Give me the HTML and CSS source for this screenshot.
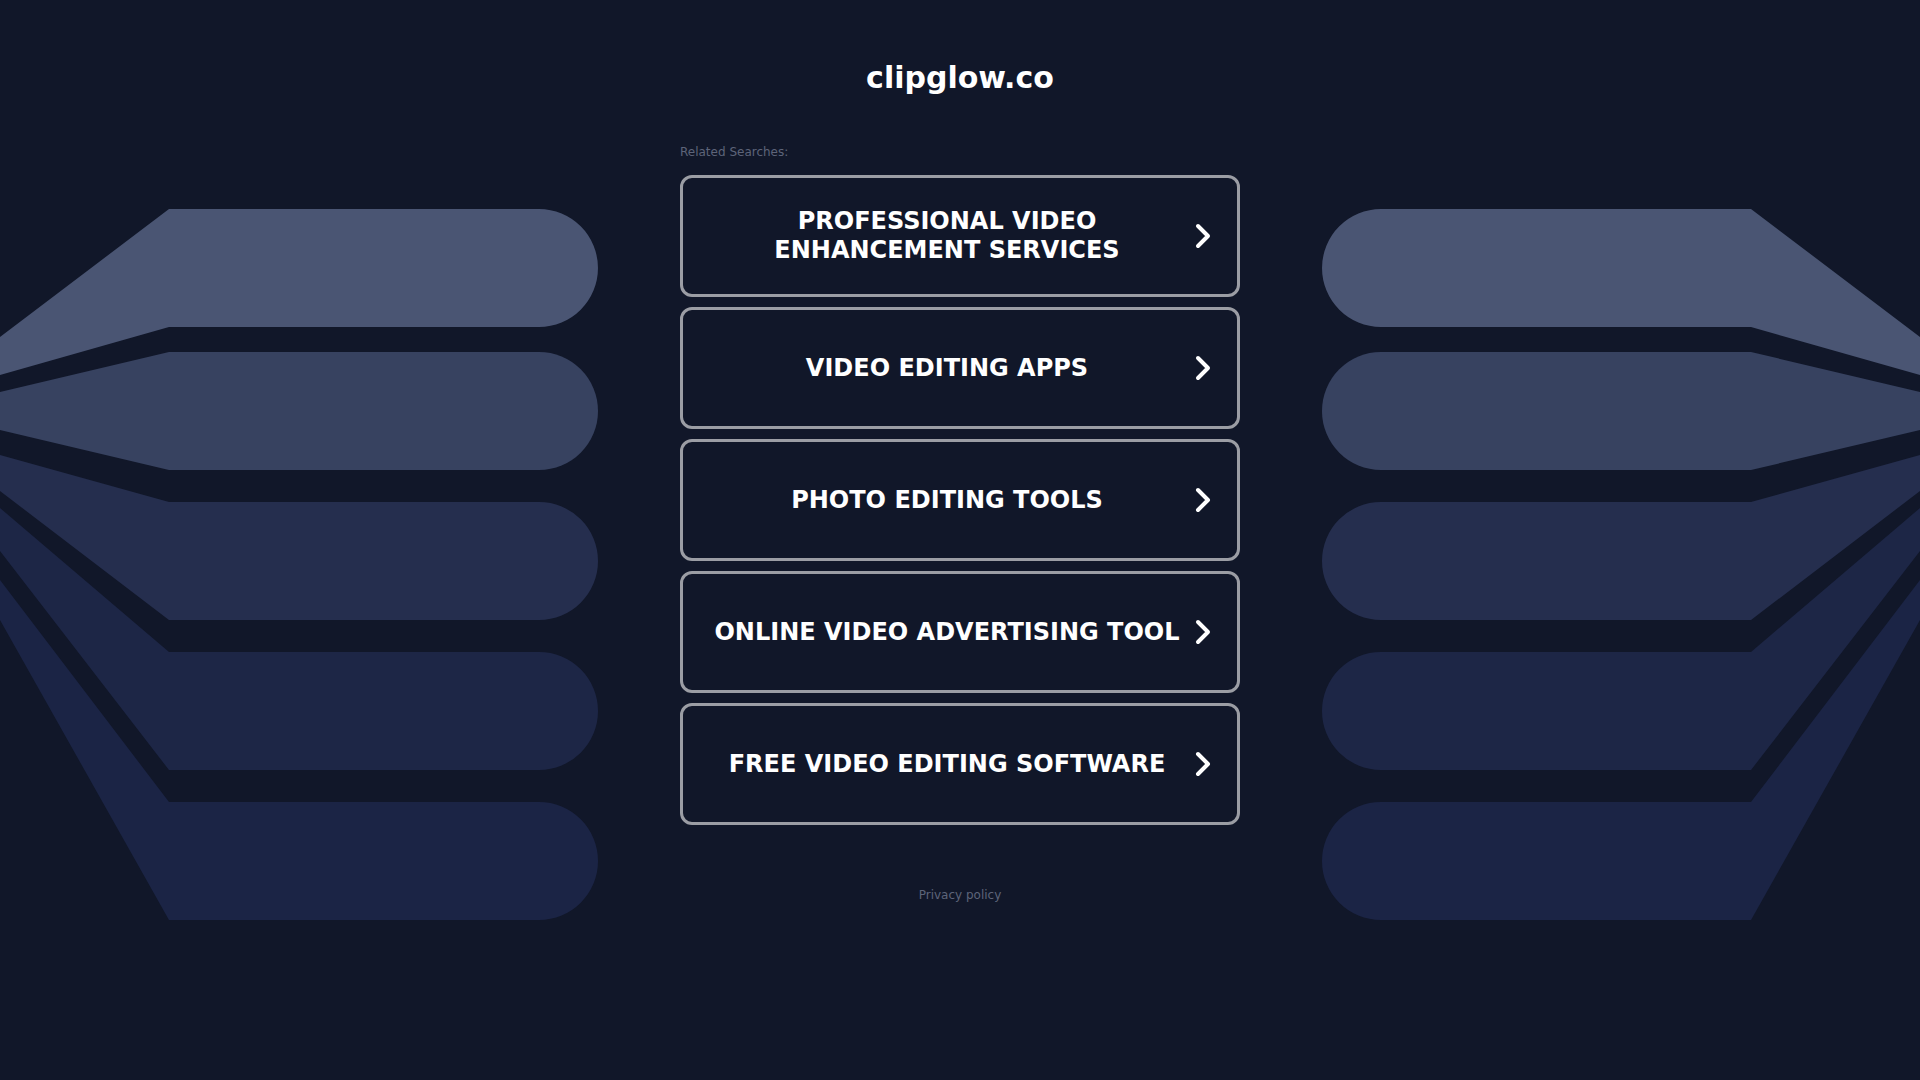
FILE: index.html
```html
<html>
  <meta charset="UTF-8" />
  <head>
    <title>clipglow.co</title>
    <link rel="stylesheet" href="styles.css">
  </head>
  <body>
    <svg class="fan left" width="600" height="1080" viewBox="0 0 600 1080">
      <path class="b1" d="M0 337 L169 209 L539 209 A59 59 0 0 1 539 327 L169 327 L0 375 Z" />
      <path class="b2" d="M0 392 L169 352 L539 352 A59 59 0 0 1 539 470 L169 470 L0 430 Z" />
      <path class="b3" d="M0 455 L169 502 L539 502 A59 59 0 0 1 539 620 L169 620 L0 491 Z" />
      <path class="b4" d="M0 508 L169 652 L539 652 A59 59 0 0 1 539 770 L169 770 L0 551 Z" />
      <path class="b5" d="M0 580 L169 802 L539 802 A59 59 0 0 1 539 920 L169 920 L0 620 Z" />
    </svg>
    <svg class="fan right" width="600" height="1080" viewBox="0 0 600 1080">
      <path class="b1" d="M0 337 L169 209 L539 209 A59 59 0 0 1 539 327 L169 327 L0 375 Z" />
      <path class="b2" d="M0 392 L169 352 L539 352 A59 59 0 0 1 539 470 L169 470 L0 430 Z" />
      <path class="b3" d="M0 455 L169 502 L539 502 A59 59 0 0 1 539 620 L169 620 L0 491 Z" />
      <path class="b4" d="M0 508 L169 652 L539 652 A59 59 0 0 1 539 770 L169 770 L0 551 Z" />
      <path class="b5" d="M0 580 L169 802 L539 802 A59 59 0 0 1 539 920 L169 920 L0 620 Z" />
    </svg>
    <div class="page">
      <h1 class="domain">clipglow.co</h1>
      <div class="related">
        <div class="label">Related Searches:</div>
        <a class="result" href="#"><span>Professional Video Enhancement Services</span>
          <svg class="chev" width="16" height="26" viewBox="0 0 16 26"><path d="M3 3 L13 13 L3 23" /></svg></a>
        <a class="result" href="#"><span>Video Editing Apps</span>
          <svg class="chev" width="16" height="26" viewBox="0 0 16 26"><path d="M3 3 L13 13 L3 23" /></svg></a>
        <a class="result" href="#"><span>Photo Editing Tools</span>
          <svg class="chev" width="16" height="26" viewBox="0 0 16 26"><path d="M3 3 L13 13 L3 23" /></svg></a>
        <a class="result" href="#"><span>Online Video Advertising Tool</span>
          <svg class="chev" width="16" height="26" viewBox="0 0 16 26"><path d="M3 3 L13 13 L3 23" /></svg></a>
        <a class="result" href="#"><span>Free Video Editing Software</span>
          <svg class="chev" width="16" height="26" viewBox="0 0 16 26"><path d="M3 3 L13 13 L3 23" /></svg></a>
      </div>
      <a class="privacy" href="#">Privacy policy</a>
    </div>
  </body>
</html>
```

FILE: styles.css
```css
html, body {
  margin: 0; padding: 0; height: 100%; overflow: hidden;
  background-color: #111729;
  font-family: "DejaVu Sans", sans-serif;
}
.fan { position: absolute; top: 0; }
.fan.left { left: 0; }
.fan.right { right: 0; transform: scaleX(-1); }
.fan .b1 { fill: #4a5573; }
.fan .b2 { fill: #374260; }
.fan .b3 { fill: #252e4e; }
.fan .b4 { fill: #1d2646; }
.fan .b5 { fill: #1b2445; }
.page {
  position: relative;
  display: flex; flex-direction: column; align-items: center;
  padding-top: 60px;
}
.domain {
  margin: 0; color: #fff; font-size: 30px; line-height: 36px; font-weight: bold;
}
.related {
  width: 560px; margin-top: 48px;
  display: flex; flex-direction: column; gap: 10px;
}
.related > .label {
  color: #5d6479; font-size: 12px; line-height: 16px; margin-bottom: 5px;
}
.result {
  display: flex; align-items: center; box-sizing: border-box;
  height: 122px; padding: 0 26px 0 20px;
  border: 3px solid #9b9da4; border-radius: 12px;
  color: #fff; text-decoration: none;
}
.result > span {
  flex: 1; text-align: center; text-transform: uppercase;
  font-size: 24px; line-height: 29px; font-weight: bold;
}
.result > .chev { margin-left: 4px; flex: none; }
.chev path {
  fill: none; stroke: #fff; stroke-width: 4;
  stroke-linecap: round; stroke-linejoin: round;
}
.privacy {
  margin-top: 62px; color: #5d6479; font-size: 12px; line-height: 16px;
  text-decoration: none;
}
```
